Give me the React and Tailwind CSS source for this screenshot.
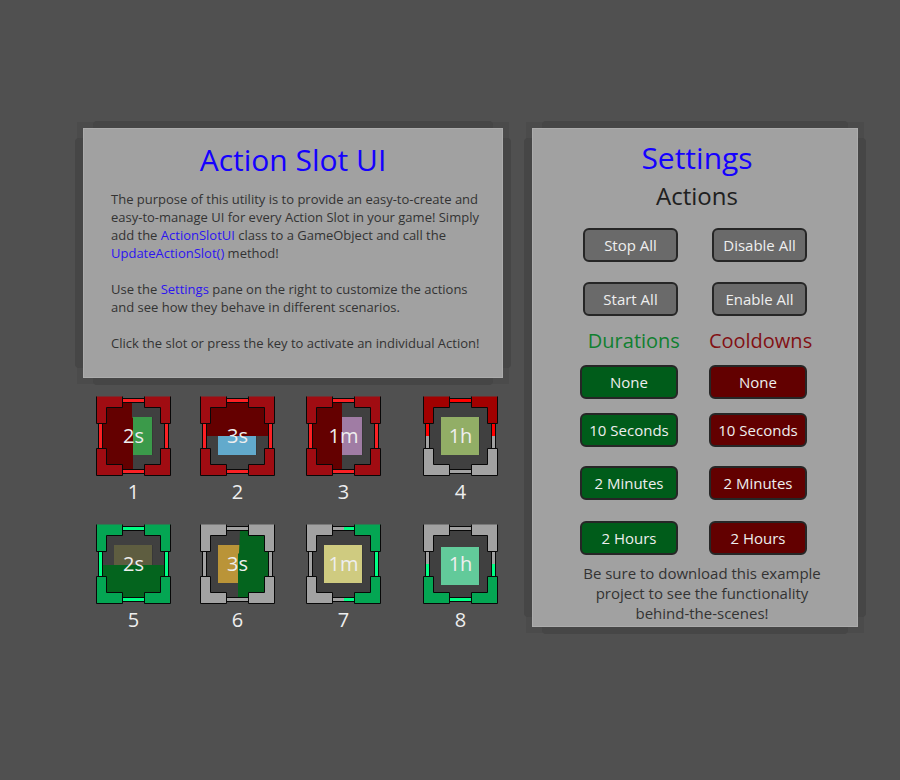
const RED = { corner: "#a00c12", bar: "#fa2024" };
const PURE_RED = { corner: "#a20000", bar: "#ff0000" };
const GREEN = { corner: "#04a653", bar: "#00ff84" };
const GRAY = { corner: "#a2a2a2", bar: "#a2a2a2" };

const SLOTS = [
  { id: 1, time: "2s", icon: "#3b9a4a", tl: RED, tr: RED, bl: RED, br: RED, fill: "#640000", shape: "M6 7H36V21L37 22V73H6Z" },
  { id: 2, time: "3s", icon: "#62aacc", tl: RED, tr: RED, bl: RED, br: RED, fill: "#640000", shape: "M7 7H69V40H7Z" },
  { id: 3, time: "1m", icon: "#a07ca4", tl: RED, tr: RED, bl: RED, br: RED, fill: "#640000", shape: "M6 7H36V73H6Z" },
  { id: 4, time: "1h", icon: "#92ae66", tl: PURE_RED, tr: PURE_RED, bl: GRAY, br: GRAY },
  { id: 5, time: "2s", icon: "#5e5d40", tl: GREEN, tr: GREEN, bl: GREEN, br: GREEN, fill: "#04641e", shape: "M7 41H69V73H7Z" },
  { id: 6, time: "3s", icon: "#ba9438", tl: GRAY, tr: GRAY, bl: GRAY, br: GRAY, fill: "#04641e", shape: "M40 6H69V73H38V30L39 29Z" },
  { id: 7, time: "1m", icon: "#cfcb80", tl: GRAY, tr: GREEN, bl: GRAY, br: GREEN },
  { id: 8, time: "1h", icon: "#62ca9a", tl: GRAY, tr: GRAY, bl: GREEN, br: GREEN, iconY: 23 },
];

function Bar({ x, y, width, height, color }) {
  return <rect x={x} y={y} width={width} height={height} fill={color} />;
}

function SlotFrame({ slot }) {
  const { tl, tr, bl, br } = slot;
  return (
    <svg width="75" height="80" viewBox="0 0 75 80" aria-hidden="true" className="[grid-area:1/1]">
      <rect x="6" y="6" width="64" height="68" fill="#404040" />
      <rect x="18" y={slot.iconY || 21} width="39" height="38" fill="#383838" />
      <rect x="18" y={slot.iconY || 21} width="38" height="38" fill={slot.icon} />
      {slot.shape && <path d={slot.shape} fill={slot.fill} />}
      <g fill="#080808">
        <rect x="26" y="2" width="24" height="5" />
        <rect x="26" y="73" width="24" height="5" />
        <rect x="2" y="27" width="5" height="26" />
        <rect x="68" y="27" width="5" height="26" />
      </g>
      <Bar x={26} y={3} width={12} height={3} color={tl.bar} />
      <Bar x={38} y={3} width={12} height={3} color={tr.bar} />
      <Bar x={26} y={74} width={12} height={3} color={bl.bar} />
      <Bar x={38} y={74} width={12} height={3} color={br.bar} />
      <Bar x={3} y={27} width={3} height={13} color={tl.bar} />
      <Bar x={3} y={40} width={3} height={13} color={bl.bar} />
      <Bar x={69} y={27} width={3} height={13} color={tr.bar} />
      <Bar x={69} y={40} width={3} height={13} color={br.bar} />
      <g stroke="#080808" strokeWidth="1">
        <path d="M.5 .5V27.5H10.5V11.5H26.5V.5" fill={tl.corner} />
        <path d="M48.5 .5V11.5H64.5V27.5H74.5V.5" fill={tr.corner} />
        <path d="M.5 52.5H10.5V68.5H26.5V79.5H.5Z" fill={bl.corner} />
        <path d="M64.5 52.5H74.5V79.5H48.5V68.5H64.5Z" fill={br.corner} />
      </g>
    </svg>
  );
}

function Slot({ slot }) {
  return (
    <button type="button" className="flex w-[75px] cursor-pointer flex-col items-center text-xl text-[#eeeeee]">
      <span className="grid place-items-center">
        <SlotFrame slot={slot} />
        <span className="z-10 leading-7 [grid-area:1/1]">{slot.time}</span>
      </span>
      <span className="leading-8">{slot.id}</span>
    </button>
  );
}

function Panel({ className, children }) {
  return (
    <section className="relative isolate shadow-[0_0_0_6px_#4b4b4b] before:absolute before:inset-x-[10px] before:-inset-y-[7px] before:-z-20 before:rounded-sm before:bg-[#464646] after:absolute after:-inset-x-[8px] after:inset-y-[10px] after:-z-20 after:rounded-sm after:bg-[#464646]">
      <div className={"border border-[#acacac] bg-[#a1a1a1] " + className}>{children}</div>
    </section>
  );
}

const TONES = {
  gray: "w-[95px] bg-[#6a6a6a]",
  green: "w-[98px] bg-[#005c1a]",
  red: "w-[98px] bg-[#620000]",
};

function Button({ tone, children }) {
  return (
    <button
      type="button"
      className={
        "h-[34px] cursor-pointer rounded-md border-2 border-[#262626] text-[15px] leading-5 whitespace-nowrap text-[#eeeeee] " +
        TONES[tone]
      }
    >
      {children}
    </button>
  );
}

const PAIR = "grid grid-cols-[98px_98px] justify-center justify-items-end gap-x-[31px] pr-[3px]";

function DurationRow({ className = "", label }) {
  return (
    <div className={PAIR + " " + className}>
      <Button tone="green">{label}</Button>
      <Button tone="red">{label}</Button>
    </div>
  );
}

export default function App() {
  return (
    <main className="min-h-screen bg-[#505050] pt-32 pr-[42px] pl-[83px] font-['Open_Sans','Noto_Sans',sans-serif] text-[#333333]">
      <div className="grid grid-cols-[minmax(0,420fr)_minmax(0,326fr)] items-start gap-[29px]">
        <div>
          <Panel className="px-[27px] pt-[11px] pb-[25px]">
            <h1 className="text-center text-[30px] leading-10 text-[#1400ff]">Action Slot UI</h1>
            <div className="mt-[10px] text-[13px] leading-[18px] whitespace-nowrap">
              <p>
                The purpose of this utility is to provide an easy-to-create and
                <br />
                easy-to-manage UI for every Action Slot in your game! Simply
                <br />
                add the <span className="text-[#2c14f0]">ActionSlotUI</span> class to a GameObject and call the
                <br />
                <span className="text-[#2c14f0]">UpdateActionSlot()</span> method!
              </p>
              <p className="mt-[18px]">
                Use the <span className="text-[#2c14f0]">Settings</span> pane on the right to customize the actions
                <br />
                and see how they behave in different scenarios.
              </p>
              <p className="mt-[18px]">Click the slot or press the key to activate an individual Action!</p>
            </div>
          </Panel>
          <div className="mt-[18px] ml-[13px] grid grid-cols-[104fr_106fr_117fr_80fr] gap-y-4">
            {SLOTS.map((slot) => (
              <Slot key={slot.id} slot={slot} />
            ))}
          </div>
        </div>

        <Panel className="pt-[9px] pb-[3px]">
          <h2 className="pl-1 text-center text-[30px] leading-10 text-[#1400ff]">Settings</h2>
          <h3 className="pl-1 text-center text-2xl leading-9 text-[#202020]">Actions</h3>
          <div className={PAIR + " mt-[14px] gap-y-5"}>
            <Button tone="gray">Stop All</Button>
            <Button tone="gray">Disable All</Button>
            <Button tone="gray">Start All</Button>
            <Button tone="gray">Enable All</Button>
          </div>
          <div className="flex justify-center gap-[29px] pl-[10px] text-xl leading-[49px]">
            <h3 className="text-[#108030]">Durations</h3>
            <h3 className="text-[#821014]">Cooldowns</h3>
          </div>
          <DurationRow label="None" />
          <DurationRow className="mt-[14px]" label="10 Seconds" />
          <DurationRow className="mt-[19px]" label="2 Minutes" />
          <DurationRow className="mt-[21px]" label="2 Hours" />
          <p className="mt-2 pl-[14px] text-center text-[15px] leading-5">
            Be sure to download this example
            <br />
            project to see the functionality
            <br />
            behind-the-scenes!
          </p>
        </Panel>
      </div>
    </main>
  );
}
